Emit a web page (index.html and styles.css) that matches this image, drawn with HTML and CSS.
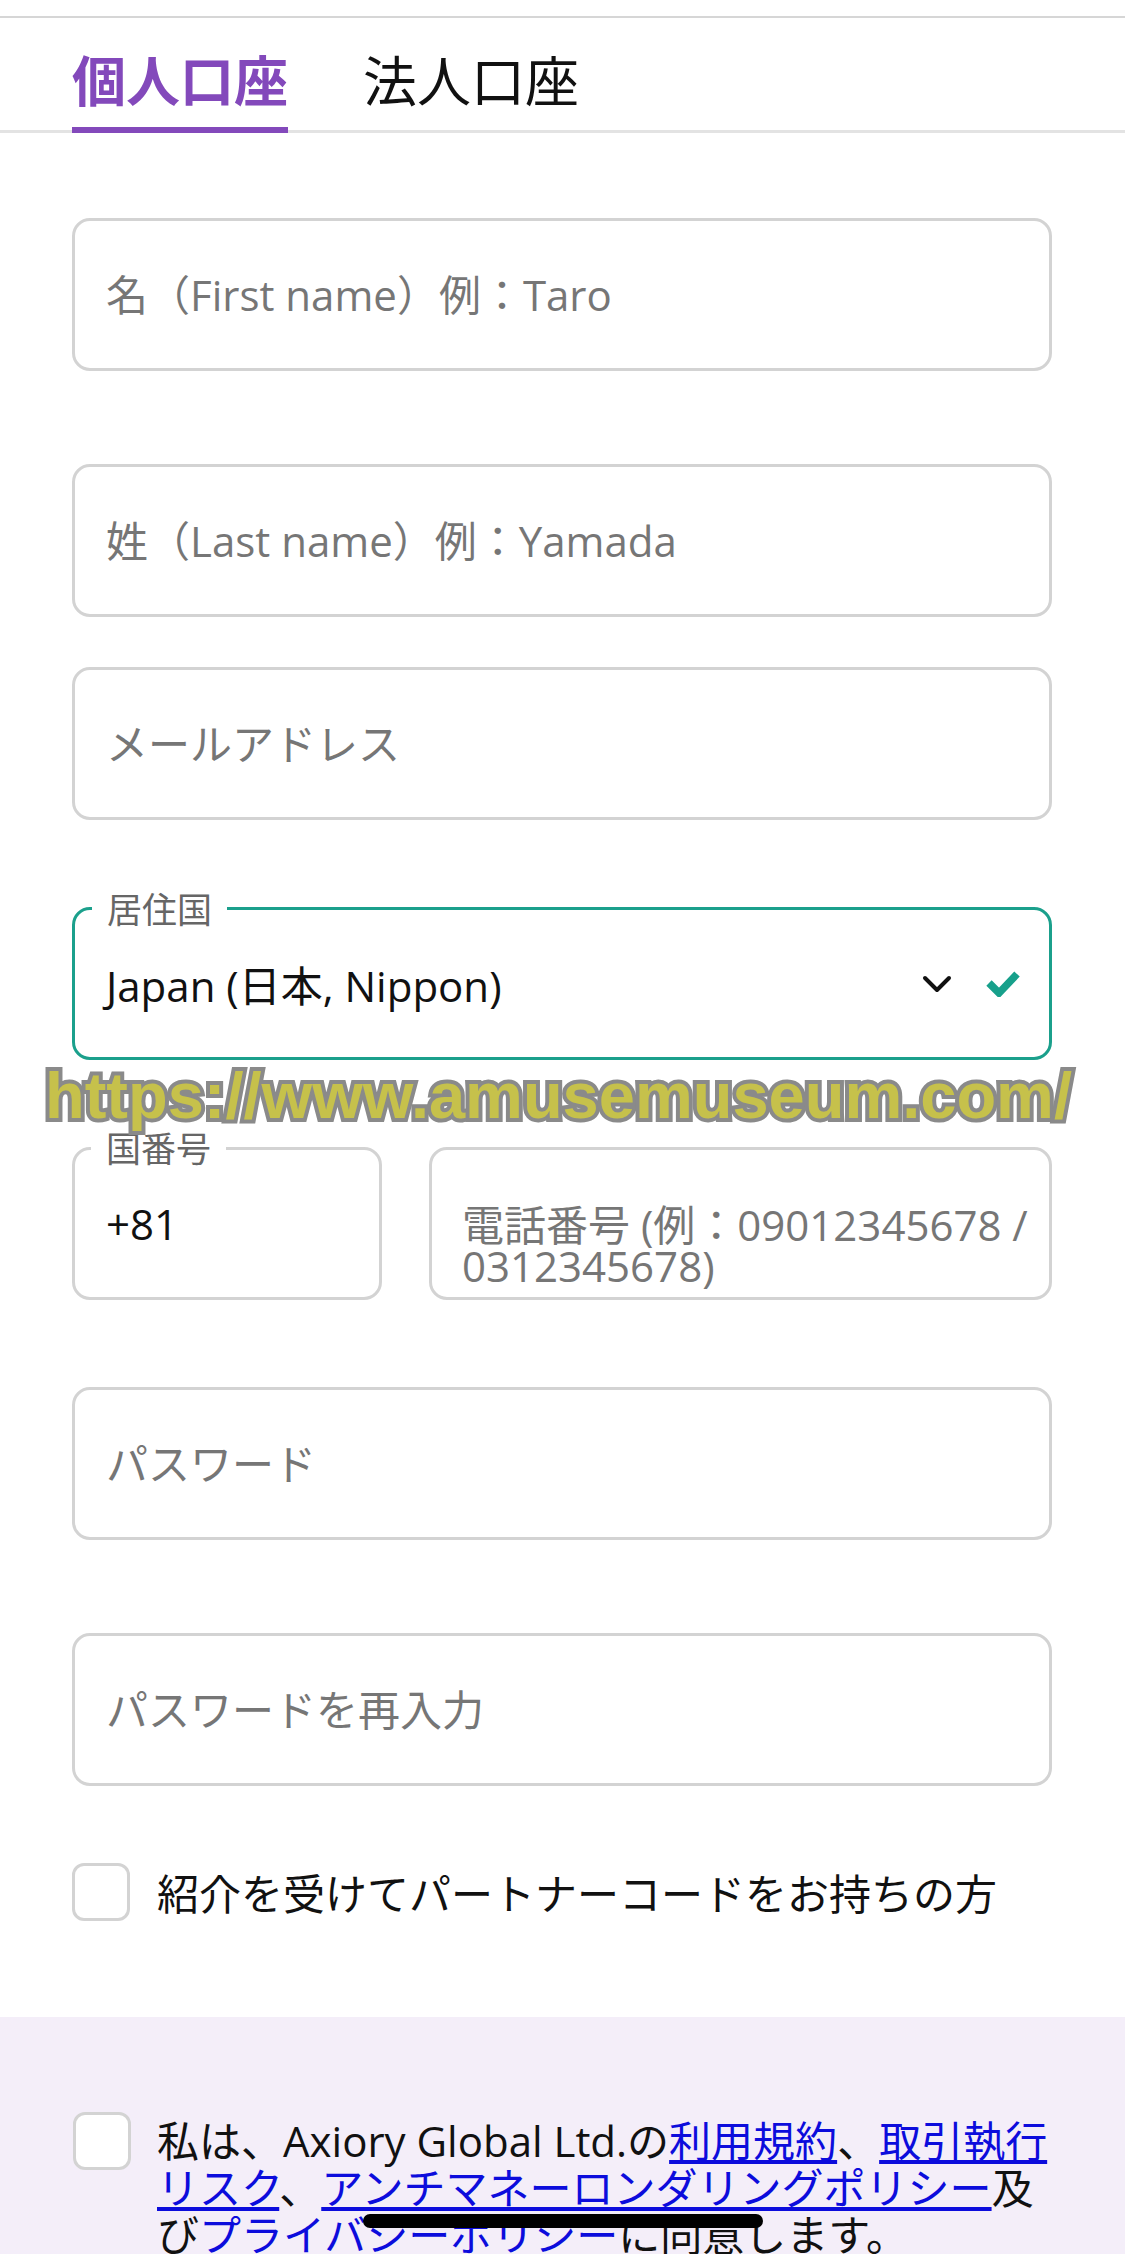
FILE: index.html
```
<!DOCTYPE html>
<html lang="ja">
	<head>
		<meta charset="utf-8">
		<title>口座開設</title>
		<link rel="stylesheet" href="styles.css">
	</head>
	<body>
		<div class="topbar"></div>
		<div class="tabs">
			<span class="tab tab-active">個人口座</span>
			<span class="tab">法人口座</span>
		</div>

		<form class="form">
			<input class="field row-first" type="text" placeholder="名（First name）例：Taro">
			<input class="field row-wide" type="text" placeholder="姓（Last name）例：Yamada">
			<input class="field row-tight" type="email" placeholder="メールアドレス">

			<!-- 居住国 -->
			<div class="select row-mid">
				<span class="float-label">居住国</span>
				<span class="select-value">Japan (日本, Nippon)</span>
				<svg class="chevron" viewBox="0 0 30 18">
					<path d="M3 3 L15 15 L27 3" fill="none" stroke="#111" stroke-width="4" stroke-linecap="round" stroke-linejoin="round"/>
				</svg>
				<svg class="tick" viewBox="0 0 34 27">
					<path d="M3 13 L13 23 L31 4" fill="none" stroke="#17a08b" stroke-width="7.5" stroke-linejoin="miter"/>
				</svg>
			</div>

			<div class="phone row-mid">
				<div class="labelled">
					<span class="float-label">国番号</span>
					<input class="field" type="text" value="+81">
				</div>
				<textarea class="field field-area" placeholder="電話番号 (例：09012345678 / 0312345678)"></textarea>
			</div>

			<input class="field row-mid" type="password" placeholder="パスワード">
			<input class="field row-wide" type="password" placeholder="パスワードを再入力">

			<label class="check-row row-check">
				<input class="check" type="checkbox">
				<span>紹介を受けてパートナーコードをお持ちの方</span>
			</label>
		</form>

		<div class="agree">
			<label class="check-row agree-row">
				<input class="check" type="checkbox">
				<span class="agree-text">私は、Axiory Global Ltd.の<a href="#">利用規約</a>、<a href="#">取引執行リスク</a>、<a href="#">アンチマネーロンダリングポリシー</a>及び<a href="#">プライバシーポリシー</a>に同意します。</span>
			</label>
		</div>

		<div class="watermark">https://www.amusemuseum.com/</div>
		<div class="home-bar"></div>
	</body>
</html>
```

FILE: styles.css
```
* {
	box-sizing: border-box;
}

body {
	margin: 0;
	background-color: #fff;
	color: #111;
	font-family: "Open Sans", "Noto Sans CJK JP", sans-serif;
	overflow: hidden;
}

.topbar {
	height: 18px;
	border-bottom: 2px solid #d6d6d6;
}

/* tabs */
.tabs {
	display: flex;
	gap: 75px;
	padding: 0 72px;
	border-bottom: 3px solid #e3e3e3;
}

.tab {
	padding-top: 33px;
	padding-bottom: 21px;
	margin-bottom: -3px;
	border-bottom: 6px solid transparent;
	font-family: "Noto Sans CJK JP", sans-serif;
	font-size: 54px;
	line-height: 55px;
	color: #111;
}

.tab-active {
	color: #8349bb;
	font-weight: 700;
	border-bottom-color: #8349bb;
}

/* form */
.form {
	display: flex;
	flex-direction: column;
	padding: 0 73px 95px 72px;
}

.field {
	display: block;
	width: 100%;
	height: 153px;
	margin: 0;
	padding: 0 30px 0 31px;
	border: 3px solid #d3d3d3;
	border-radius: 18px;
	background-color: #fff;
	font-family: "Open Sans", "Noto Sans CJK JP", sans-serif;
	font-size: 42px;
	color: #111;
	outline: none;
}

.field::placeholder {
	color: #767676;
	opacity: 1;
}

.row-first {
	margin-top: 85px;
}

.row-wide {
	margin-top: 93px;
}

.row-tight {
	margin-top: 50px;
}

.row-mid {
	margin-top: 87px;
}

.row-check {
	margin-top: 75px;
}

.float-label {
	position: absolute;
	left: 17px;
	top: -20px;
	padding: 0 15px;
	background-color: #fff;
	font-family: "Noto Sans CJK JP", sans-serif;
	font-size: 35px;
	line-height: 35px;
	color: #666;
}

.select {
	position: relative;
	display: flex;
	align-items: center;
	height: 153px;
	padding: 0 29px 0 31px;
	border: 3px solid #1ba08c;
	border-radius: 18px;
	font-size: 42px;
}

.select-value {
	flex: 1;
}

.chevron {
	width: 30px;
	height: 18px;
	margin-right: 34px;
}

.tick {
	width: 34px;
	height: 27px;
}

.phone {
	display: grid;
	grid-template-columns: 310px 1fr;
	gap: 47px;
}

.labelled {
	position: relative;
}

.labelled .float-label {
	left: 19px;
	top: -18px;
}

.field-area {
	resize: none;
	overflow: hidden;
	padding: 54px 4px 0 30px;
	line-height: 41px;
}

/* checkboxes */
.check-row {
	display: flex;
	align-items: center;
	gap: 27px;
	font-size: 42px;
}

.check {
	-webkit-appearance: none;
	appearance: none;
	flex: none;
	width: 58px;
	height: 58px;
	margin: 0;
	border: 3px solid #d3d3d3;
	border-radius: 12px;
	background-color: #fff;
}

.agree {
	min-height: 400px;
	padding: 95px 65px 0 73px;
	background-color: #f4eef9;
}

.agree-row {
	align-items: flex-start;
	gap: 26px;
}

.agree-text {
	margin-top: 5px;
	line-height: 47px;
}

.agree-text a {
	color: #0c0cdc;
	text-decoration: underline;
}

/* overlays */
.watermark {
	position: absolute;
	top: 1063px;
	left: 45px;
	font-family: "Liberation Sans", Arial, sans-serif;
	font-weight: 700;
	font-size: 65px;
	line-height: 1;
	color: #c6c14b;
	-webkit-text-stroke: 8px #8a8a8a;
	paint-order: stroke fill;
	white-space: nowrap;
}

.home-bar {
	position: fixed;
	left: 363px;
	bottom: 26px;
	width: 400px;
	height: 14px;
	border-radius: 7px;
	background-color: #000;
}
```
